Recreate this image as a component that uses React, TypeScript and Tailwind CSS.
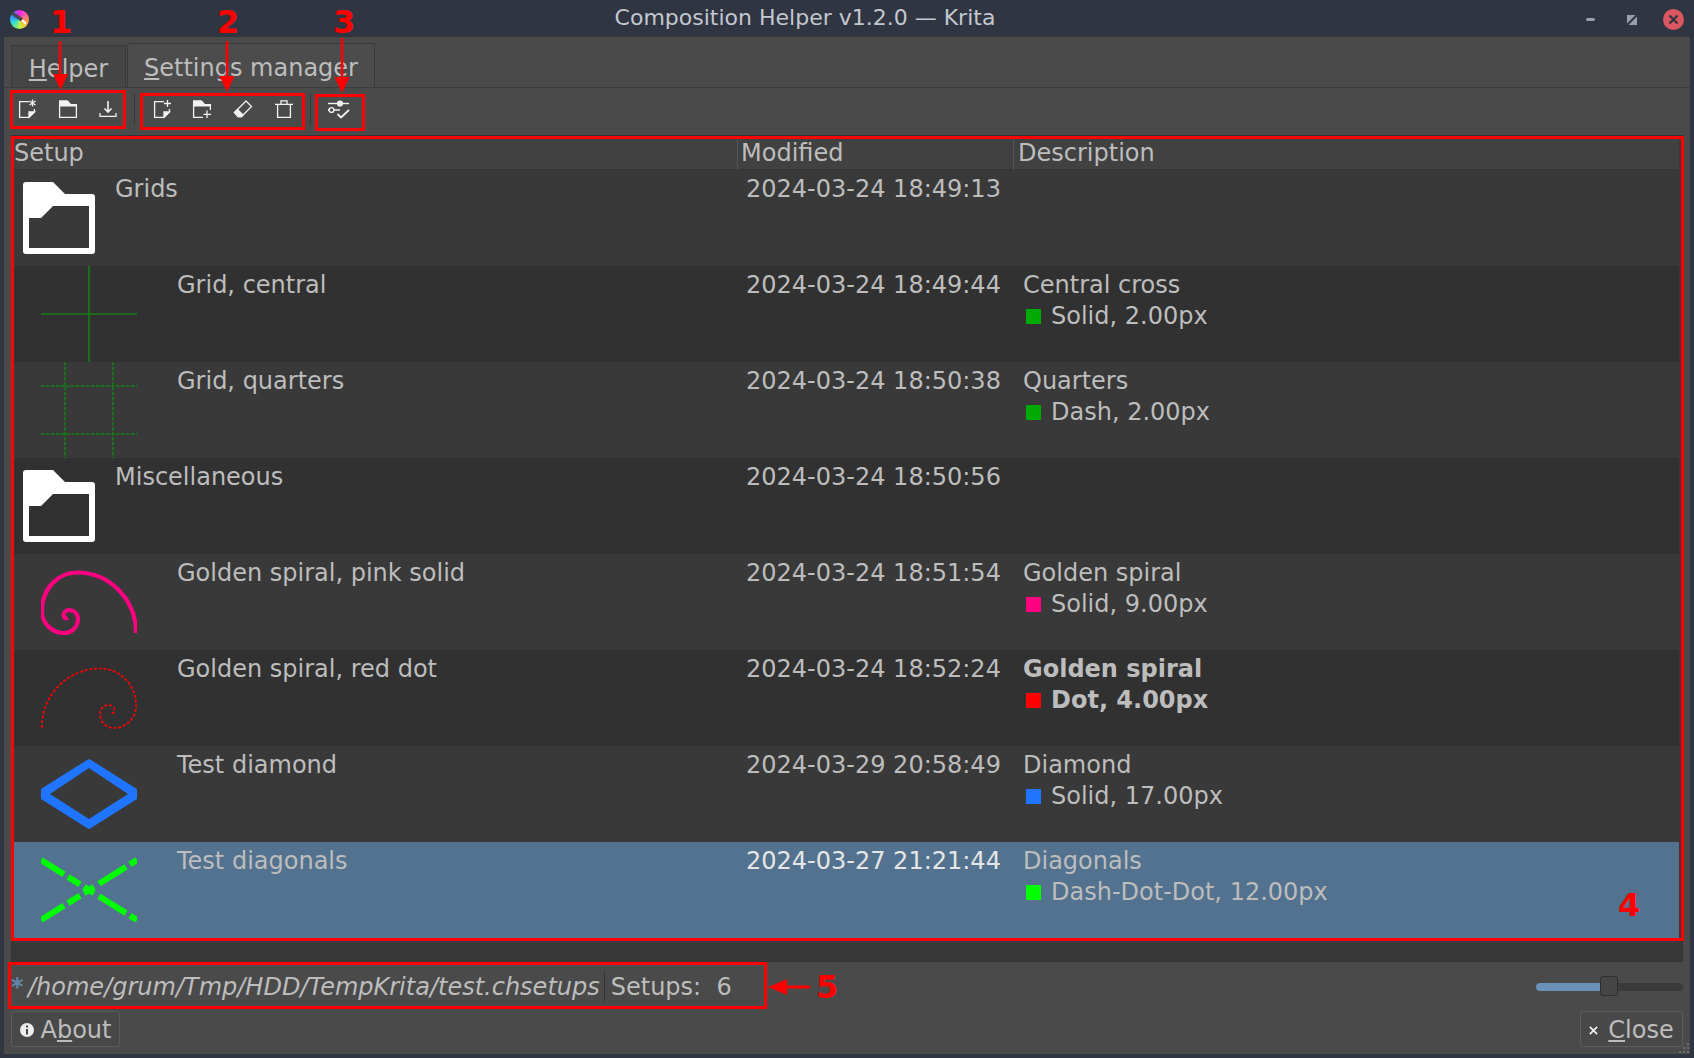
import type { ReactNode } from "react";

const iconCls = "w-5 h-5 text-[#f2f2f2]";

function Ico({ children }: { children: ReactNode }) {
  return (
    <svg viewBox="0 0 20 20" className={iconCls} fill="none" stroke="currentColor" strokeWidth="1.3">
      {children}
    </svg>
  );
}

const toolbarIcons = {
  newStar: (
    <Ico>
      <path d="M12 2.6H2.6V18.4H12L17.4 13V10" />
      <path d="M12 18V13H17.4Z" fill="currentColor" />
      <path d="M15.5 0.5V7.5M12.5 2L18.5 6M18.5 2L12.5 6" />
    </Ico>
  ),
  open: (
    <Ico>
      <path d="M1.6 6V18.4H18.4V6H1.6Z" />
      <path d="M1 1.2H9.5L13 5H19V7.5H1Z" fill="currentColor" stroke="none" />
    </Ico>
  ),
  save: (
    <Ico>
      <path d="M10 2V12.5M6.5 9.5L10 13L13.5 9.5" strokeWidth="1.6" />
      <path d="M2 14V17.4H18V14" />
    </Ico>
  ),
  newPlus: (
    <Ico>
      <path d="M12 2.6H2.6V18.4H12L17.4 13V10" />
      <path d="M12 18V13H17.4Z" fill="currentColor" />
      <path d="M15.5 1V8M12 4.5H19" />
    </Ico>
  ),
  folderPlus: (
    <Ico>
      <path d="M1.6 6V18.4H11M18.4 6V11" />
      <path d="M1 1.2H9.5L13 5H19V7.5H1Z" fill="currentColor" stroke="none" />
      <path d="M15 11.5V19M11.5 15.3H19" />
    </Ico>
  ),
  eraser: (
    <Ico>
      <path d="M13 2L18.5 7.5L8.5 17.5H5L1.5 13.5Z" />
      <path d="M4.5 10.5L10 16L8.5 17.5H5L1.5 13.5Z" fill="currentColor" />
    </Ico>
  ),
  trash: (
    <Ico>
      <path d="M1 5.4H19M7 5V1.8H13V5M3.6 5.4V18.4H16.4V5.4" />
    </Ico>
  ),
  settings: (
    <svg viewBox="0 0 22 20" className="w-[22px] h-5 text-[#f2f2f2]" fill="none" stroke="currentColor" strokeWidth="1.4">
      <path d="M0 4.5H21" />
      <circle cx="12" cy="4.5" r="2.4" fill="currentColor" />
      <path d="M6 11H12M0 11H1" />
      <circle cx="3.5" cy="11" r="2.4" />
      <path d="M9.5 15L13 18.5L21 11" strokeWidth="1.8" />
    </svg>
  ),
};

function ToolButton({ children }: { children: ReactNode }) {
  return <div className="w-[40.5px] h-full flex items-center justify-center">{children}</div>;
}

function FolderThumb() {
  return (
    <svg viewBox="0 0 72 72" className="w-[72px] h-[72px] mt-3 ml-[9px] shrink-0">
      <path
        fillRule="evenodd"
        fill="#ffffff"
        d="M3 0H30L42 12H69A3 3 0 0 1 72 15V69A3 3 0 0 1 69 72H3A3 3 0 0 1 0 69V3A3 3 0 0 1 3 0ZM6 36V66H66V24H30L18 36Z"
      />
    </svg>
  );
}

function Thumb({ children }: { children: ReactNode }) {
  return (
    <svg viewBox="0 0 96 96" className="w-24 h-24 ml-[27px] shrink-0 overflow-hidden" fill="none">
      {children}
    </svg>
  );
}

const thumbs: Record<string, ReactNode> = {
  central: (
    <Thumb>
      <path d="M0 48H96M48 0V96" stroke="#167f16" strokeWidth="1.6" />
    </Thumb>
  ),
  quarters: (
    <Thumb>
      <path d="M0 24H96M0 72H96M24 0V96M72 0V96" stroke="#167f16" strokeWidth="1.6" strokeDasharray="3.5 1.5" />
    </Thumb>
  ),
  pink: (
    <Thumb>
      <path
        d="M95 79A59 60 0 0 0 36 18.5A35 37.5 0 0 0 1 56A22 22 0 0 0 23 79A14 14 0 0 0 37 65A9 9 0 0 0 28 56A5.5 5.5 0 0 0 22.5 61.5A3 3 0 0 0 27 64"
        stroke="#ff0080"
        strokeWidth="4.2"
      />
    </Thumb>
  ),
  red: (
    <Thumb>
      <path
        d="M1 78A58 58 0 0 1 59 18.5A36 36 0 0 1 95 56A22 22 0 0 1 73 78A14 14 0 0 1 59 64A9 9 0 0 1 68 55A5.5 5.5 0 0 1 73.5 60.5A3 3 0 0 1 69 63"
        stroke="#ff0000"
        strokeWidth="1.7"
        strokeDasharray="3 1.8"
      />
    </Thumb>
  ),
  diamond: (
    <Thumb>
      <path
        fillRule="evenodd"
        fill="#1f75ff"
        d="M46 14L48 13L50 14L96 43V53L50 82L48 83L46 82L0 53V43ZM9 48L48 73L87 48L48 22Z"
      />
    </Thumb>
  ),
  diagonals: (
    <Thumb>
      <path
        d="M0 18L23 32.4M27 34.9L39 42.4M43 44.9L53 51.1M58 54.2L85 71.1M89 73.6L96 78M0 78L23 63.6M27 61.1L39 53.6M43 51.1L53 44.9M58 41.8L85 24.9M89 22.4L96 18"
        stroke="#00ff00"
        strokeWidth="6"
      />
    </Thumb>
  ),
};

type Row = {
  name: string;
  date: string;
  folder?: boolean;
  thumb?: string;
  title?: string;
  line?: string;
  dot?: string;
  bold?: boolean;
  selected?: boolean;
};

const rows: Row[] = [
  { name: "Grids", date: "2024-03-24 18:49:13", folder: true },
  { name: "Grid, central", date: "2024-03-24 18:49:44", thumb: "central", title: "Central cross", line: "Solid, 2.00px", dot: "bg-[#00aa00]" },
  { name: "Grid, quarters", date: "2024-03-24 18:50:38", thumb: "quarters", title: "Quarters", line: "Dash, 2.00px", dot: "bg-[#00aa00]" },
  { name: "Miscellaneous", date: "2024-03-24 18:50:56", folder: true },
  { name: "Golden spiral, pink solid", date: "2024-03-24 18:51:54", thumb: "pink", title: "Golden spiral", line: "Solid, 9.00px", dot: "bg-[#ff0080]" },
  { name: "Golden spiral, red dot", date: "2024-03-24 18:52:24", thumb: "red", title: "Golden spiral", line: "Dot, 4.00px", dot: "bg-[#ff0000]", bold: true },
  { name: "Test diamond", date: "2024-03-29 20:58:49", thumb: "diamond", title: "Diamond", line: "Solid, 17.00px", dot: "bg-[#1f75ff]" },
  { name: "Test diagonals", date: "2024-03-27 21:21:44", thumb: "diagonals", title: "Diagonals", line: "Dash-Dot-Dot, 12.00px", dot: "bg-[#00ff00]", selected: true },
];

function SetupRow({ row, index }: { row: Row; index: number }) {
  const bg = row.selected ? "bg-[#53728f]" : index % 2 === 0 ? "bg-[#393939]" : "bg-[#313131]";
  return (
    <div className={`grid grid-cols-[723px_276px_1fr] h-24 leading-[31px] ${bg}`}>
      <div className="flex">
        {row.folder ? <FolderThumb /> : row.thumb ? thumbs[row.thumb] : null}
        <span className={`pt-1 ${row.folder ? "ml-[20px]" : "ml-10"}`}>{row.name}</span>
      </div>
      <div className={`pt-1 pl-[9px] ${row.selected ? "text-[#e6e6e6]" : ""}`}>{row.date}</div>
      <div className={`pt-1 pl-[10px] ${row.bold ? "font-bold" : ""}`}>
        {row.title && <div>{row.title}</div>}
        {row.line && (
          <div className="flex items-center">
            <span className={`w-[15px] h-[15px] ml-[3px] mr-[10px] ${row.dot}`} />
            {row.line}
          </div>
        )}
      </div>
    </div>
  );
}

function Annotations() {
  const boxes = [
    "left-[10px] top-[90px] w-[116px] h-[39px]",
    "left-[140px] top-[93px] w-[165px] h-[37px]",
    "left-[315px] top-[94px] w-[50px] h-[37px]",
    "left-[11px] top-[136px] w-[1673px] h-[805px]",
    "left-[8px] top-[962px] w-[759px] h-[47px]",
  ];
  const labels = [
    { text: "1", cls: "left-[50px] top-[3px]" },
    { text: "2", cls: "left-[217px] top-[3px]" },
    { text: "3", cls: "left-[333px] top-[3px]" },
    { text: "4", cls: "left-[1618px] top-[886px]" },
    { text: "5", cls: "left-[816px] top-[968px]" },
  ];
  return (
    <>
      {boxes.map((b) => (
        <div key={b} className={`absolute border-[3px] border-[#ff0000] ${b}`} />
      ))}
      {labels.map((l) => (
        <span key={l.text} className={`absolute text-[32px] leading-[38px] font-bold text-[#ff0000] ${l.cls}`}>
          {l.text}
        </span>
      ))}
      <svg className="absolute left-0 top-0 w-[1694px] h-[1058px] pointer-events-none" viewBox="0 0 1694 1058">
        <g stroke="#ff0000" strokeWidth="2.5" fill="#ff0000">
          <path d="M60 41V76" />
          <path d="M227 41V78" />
          <path d="M342 38V78" />
          <path d="M786 987H810" strokeWidth="3" />
        </g>
        <g fill="#ff0000">
          <path d="M53 74H68L60.5 90Z" />
          <path d="M219.5 76H234.5L227 92Z" />
          <path d="M334.5 77H349.5L342 93Z" />
          <path d="M768 987L787 979V995Z" />
        </g>
      </svg>
    </>
  );
}

export default function App() {
  return (
    <div
      className="relative w-[1694px] h-[1058px] overflow-hidden bg-[#2f3541] flex flex-col text-[24px] text-[#bdbdbd]"
      style={{ fontFamily: '"DejaVu Sans", sans-serif' }}
    >
      {/* window title bar */}
      <header className="relative h-[37px] shrink-0 flex items-center justify-center pr-[84px] pb-[2px] text-[22px] text-[#c3c8d0]">
        <div className="absolute left-[10px] top-[10px] w-[19px] h-[19px] rounded-full bg-[conic-gradient(#ff20f0,#ffb030_120deg,#c8f040_170deg,#30e0d0_240deg,#3090ff_300deg,#ff20f0)]">
          <svg viewBox="0 0 19 19" className="w-full h-full">
            <path d="M2 3L12 10" stroke="#4a4a52" strokeWidth="3.5" />
            <path d="M12 10L16 14" stroke="#ffffff" strokeWidth="2" />
          </svg>
        </div>
        Composition Helper v1.2.0 — Krita
        <div className="absolute left-[1586px] top-[18px] w-[9px] h-[3px] rounded-sm bg-[#9a9fa9]" />
        <svg viewBox="0 0 10 10" className="absolute left-[1627px] top-[15px] w-[10px] h-[10px]">
          <path d="M0 0H8.5L0 8.5ZM10 10H1.5L10 1.5Z" fill="#9a9fa9" />
        </svg>
        <svg viewBox="0 0 21 21" className="absolute left-[1663px] top-[9px] w-[21px] h-[21px]">
          <circle cx="10.5" cy="10.5" r="10.5" fill="#dc5661" />
          <path d="M6.5 6.5L14.5 14.5M14.5 6.5L6.5 14.5" stroke="#2f3541" strokeWidth="2.2" />
        </svg>
      </header>

      <div className="relative flex-1 mx-1 mb-1 bg-[#4a4a4a] flex flex-col">
        {/* tabs */}
        <div className="h-[51px] shrink-0 flex items-end pl-[7px] gap-px border-b border-[#3c3c3c]">
          <div className="w-[115px] h-[42px] flex items-center justify-center pt-[5px] bg-[#454545] border border-b-0 border-[#3a3a3a] rounded-t-[3px]">
            <span>
              <span className="underline">H</span>elper
            </span>
          </div>
          <div className="w-[248px] h-[44px] flex items-center justify-center pt-[5px] bg-[#4c4c4c] border border-b-0 border-[#3a3a3a] rounded-t-[3px]">
            <span>
              <span className="underline">S</span>ettings manager
            </span>
          </div>
        </div>

        {/* toolbar */}
        <div className="h-[47px] shrink-0 flex items-center pl-[3px] pb-[5px]">
          <ToolButton>{toolbarIcons.newStar}</ToolButton>
          <ToolButton>{toolbarIcons.open}</ToolButton>
          <ToolButton>{toolbarIcons.save}</ToolButton>
          <div className="w-px h-[30px] ml-[5px] mr-[7px] bg-[#353535]" />
          <ToolButton>{toolbarIcons.newPlus}</ToolButton>
          <ToolButton>{toolbarIcons.folderPlus}</ToolButton>
          <ToolButton>{toolbarIcons.eraser}</ToolButton>
          <div className="ml-[1px]">
            <ToolButton>{toolbarIcons.trash}</ToolButton>
          </div>
          <div className="w-px h-[30px] ml-[5px] mr-[8px] bg-[#353535]" />
          <ToolButton>{toolbarIcons.settings}</ToolButton>
        </div>

        {/* setups table */}
        <div className="mx-[7px] h-[827px] shrink-0 border border-[#333333] bg-[#383838] pl-[2px] pr-[3px]">
          <div className="grid grid-cols-[723px_276px_1fr] h-[34px] leading-[34px] bg-[#414141] border-b border-[#353535]">
            <div>Setup</div>
            <div className="pl-[3px] border-l border-[#555555]">Modified</div>
            <div className="pl-[4px] border-l border-[#555555]">Description</div>
          </div>
          {rows.map((row, i) => (
            <SetupRow key={row.name} row={row} index={i} />
          ))}
        </div>

        {/* status bar */}
        <div className="h-[49px] shrink-0 flex items-center pl-[7px] pr-[7px]">
          <span className="w-[17px] text-[#5f87ab] italic font-bold">*</span>
          <span className="italic">/home/grum/Tmp/HDD/TempKrita/test.chsetups</span>
          <div className="w-px h-[32px] ml-[4px] mr-[6px] bg-[#333333]" />
          <span className="whitespace-pre">Setups:  6</span>
          <div className="relative ml-auto w-[147px] h-[8px] rounded-sm bg-[#3a3a3a] flex">
            <div className="w-[64px] h-full rounded-l-sm bg-[#6a92b8]" />
            <div className="absolute left-[64px] top-[-7px] w-[18px] h-[20px] rounded-[3px] bg-[#454545] border border-[#2e2e2e]" />
          </div>
        </div>

        {/* dialog buttons */}
        <div className="flex justify-between px-[7px]">
          <button className="w-[109px] h-[36px] flex items-center justify-center gap-[7px] pt-[2px] rounded-[3px] border border-[#5c5c5c] bg-[#484848]">
            <svg viewBox="0 0 14 14" className="w-[14px] h-[14px]">
              <circle cx="7" cy="7" r="7" fill="#eeeeee" />
              <path d="M7 2.5V4.5M7 6V11.5" stroke="#484848" strokeWidth="2" />
            </svg>
            <span>
              A<span className="underline">b</span>out
            </span>
          </button>
          <button className="w-[103px] h-[36px] flex items-center justify-center gap-[10px] pt-[2px] rounded-[3px] border border-[#5c5c5c] bg-[#484848]">
            <svg viewBox="0 0 10 10" className="w-[9px] h-[9px]">
              <path d="M1 1L9 9M9 1L1 9" stroke="#eeeeee" strokeWidth="2" />
            </svg>
            <span>
              <span className="underline">C</span>lose
            </span>
          </button>
        </div>

        {/* resize grip */}
        <svg viewBox="0 0 12 12" className="absolute right-0 bottom-0 w-3 h-3">
          <path d="M9 1h2v2H9zM5 5h2v2H5zM9 5h2v2H9zM1 9h2v2H1zM5 9h2v2H5zM9 9h2v2H9z" fill="#6e6e6e" />
        </svg>
      </div>

      <Annotations />
    </div>
  );
}
